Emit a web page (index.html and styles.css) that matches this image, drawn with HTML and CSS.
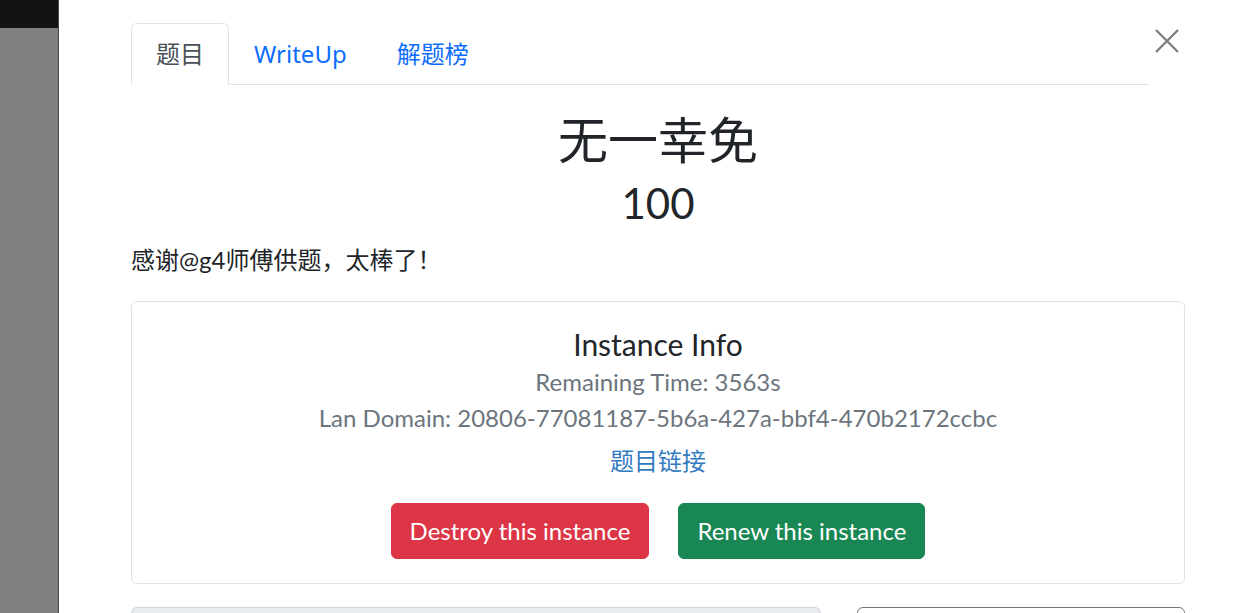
FILE: index.html
```html
<!DOCTYPE html>
<html lang="zh">
<head>
<meta charset="utf-8">
<title>无一幸免</title>
<link rel="stylesheet" href="styles.css">
</head>
<body>
<div class="page">
  <div class="backdrop">
    <div class="backdrop-top"></div>
  </div>
  <div class="modal">
    <div class="modal-body">
      <div class="modal-head">
        <ul class="tabs">
          <li class="tab active">题目</li>
          <li class="tab">WriteUp</li>
          <li class="tab">解题榜</li>
        </ul>
        <button class="close" aria-label="Close">
          <svg width="24" height="24" viewBox="0 0 24 24"><path d="M1 1 L23 23 M23 1 L1 23" stroke="#000" stroke-width="2.3" fill="none"/></svg>
        </button>
      </div>
      <h3 class="name">无一幸免</h3>
      <h4 class="value">100</h4>
      <p class="desc">感谢@g4师傅供题，太棒了！</p>
      <div class="card">
        <h5 class="card-title">Instance Info</h5>
        <p class="muted">Remaining Time: 3563s</p>
        <p class="muted">Lan Domain: 20806-77081187-5b6a-427a-bbf4-470b2172ccbc</p>
        <p class="link-line"><a class="link">题目链接</a></p>
        <div class="actions">
          <button class="btn btn-danger">Destroy this instance</button>
          <button class="btn btn-success">Renew this instance</button>
        </div>
      </div>
      <div class="submit-row">
        <div class="flag-input"></div>
        <div class="flag-submit"></div>
      </div>
    </div>
  </div>
</div>
</body>
</html>
```

FILE: styles.css
```css
* { box-sizing: border-box; }
html, body { margin: 0; padding: 0; }
body {
  font-family: Lato, "Noto Sans CJK SC", sans-serif;
  color: #212529;
  background: #fff;
  width: 1238px;
  height: 613px;
  overflow: hidden;
}
.page {
  display: flex;
  height: 613px;
}
.backdrop {
  flex: none;
  width: 59px;
  background: #7f7f7f;
  border-right: 1px solid #4a4a4a;
}
.backdrop-top {
  height: 28px;
  background: #121314;
}
.modal {
  flex: 1;
  background: #fff;
}
.modal-body {
  padding: 23px 53px 0 72px;
}
.modal-head {
  display: flex;
  align-items: flex-start;
}
.tabs {
  flex: 1;
  display: flex;
  list-style: none;
  margin: 0;
  padding: 0;
  border-bottom: 1px solid #dee2e6;
}
.tab {
  font-family: "Noto Sans", "Noto Sans CJK SC", sans-serif;
  font-size: 24px;
  line-height: 36px;
  padding: 12px 24px;
  margin-bottom: -1px;
  border: 1px solid transparent;
  border-top-left-radius: 6px;
  border-top-right-radius: 6px;
  color: #0d6efd;
}
.tab.active {
  color: #495057;
  background: #fff;
  border-color: #dee2e6 #dee2e6 #fff;
}
.close {
  width: 36px;
  height: 36px;
  padding: 6px;
  border: 0;
  background: transparent;
  opacity: .5;
  display: flex;
  align-items: center;
  justify-content: center;
}
.close svg { display: block; }
.name {
  font-size: 50px;
  font-weight: 400;
  line-height: 1.2;
  text-align: center;
  margin: 25px 0 8px;
}
.value {
  font-size: 42px;
  font-weight: 400;
  line-height: 1.2;
  text-align: center;
  margin: 0 0 14px;
}
.desc {
  font-size: 24px;
  line-height: 36px;
  margin: 0 0 23px;
}
.card {
  border: 1px solid #dee2e6;
  border-radius: 6px;
  padding: 24px;
  text-align: center;
}
.card-title {
  font-size: 30px;
  font-weight: 400;
  line-height: 36px;
  margin: 0 0 2px;
}
.muted {
  color: #6c757d;
  font-size: 24px;
  line-height: 36px;
  margin: 0;
}
.link-line {
  font-size: 24px;
  line-height: 36px;
  margin: 7px 0 24px;
}
.link {
  color: #337bbf;
  text-decoration: none;
}
.actions {
  display: flex;
  justify-content: center;
  gap: 29px;
}
.btn {
  font-family: Lato, "Noto Sans CJK SC", sans-serif;
  font-size: 24px;
  line-height: 36px;
  padding: 9px 18px;
  border: 1px solid transparent;
  border-radius: 6px;
  color: #fff;
}
.btn-danger { background: #dc3545; border-color: #dc3545; }
.btn-success { background: #198754; border-color: #198754; }
.submit-row {
  display: flex;
  gap: 36px;
  margin-top: 23px;
}
.flag-input {
  flex: 691;
  height: 56px;
  background: #e9ecef;
  border: 1px solid #ced4da;
  border-radius: 6px;
}
.flag-submit {
  flex: 327;
  height: 56px;
  border: 1px solid #6c757d;
  border-radius: 6px;
}
```
